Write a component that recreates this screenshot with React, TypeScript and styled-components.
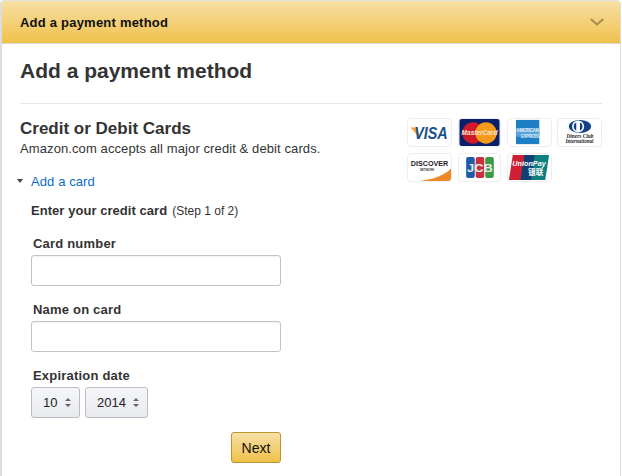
import React from "react";
import styled, { createGlobalStyle } from "styled-components";

const Global = createGlobalStyle`
  html, body { margin: 0; padding: 0; background: #fff; overflow: hidden; }
  body { font-family: "Liberation Sans", Arial, sans-serif; color: #333; }
  * { box-sizing: border-box; }
`;
const Panel = styled.div`
  width: 621px; height: 476px; overflow: hidden;
  border: 1px solid #ddd; border-left-width: 2px; border-bottom: none; border-top: 1px solid #e3e3e3;
  border-radius: 4px 4px 0 0; background: #fff;
`;
const Header = styled.header`
  height: 43px; display: flex; align-items: center; justify-content: space-between;
  padding: 1px 16px 0 18px;
  background: linear-gradient(#f7dfa5, #f0c14b);
  border-bottom: 1px solid #d9d9d9;
`;
const HeaderTitle = styled.h3`
  margin: 0; font-size: 13px; letter-spacing: .22px; font-weight: bold; color: #111;
`;
const Chevron = styled.svg`
  width: 14px; height: 8px; margin-top: -2px; display: block;
`;
const Body = styled.main`
  padding: 14px 18px 0 18px;
`;
const PageTitle = styled.h1`
  margin: 0; font-size: 21px; line-height: 26px; font-weight: bold; color: #333;
`;
const Divider = styled.hr`
  margin: 19px 0 0; border: 0; border-top: 1px solid #e7e7e7;
`;
const Columns = styled.div`
  display: flex; justify-content: space-between; padding-top: 14px;
`;
const MainColumn = styled.div`
  width: 330px;
`;
const SectionTitle = styled.h2`
  margin: 1px 0 0; font-size: 17px; line-height: 20px; font-weight: bold; color: #333;
`;
const SectionText = styled.p`
  margin: 2px 0 0; font-size: 13px; letter-spacing: .1px; line-height: 16px; color: #333;
`;
const Logos = styled.div`
  width: 195px; display: grid; grid-template-columns: 51px 49px 50px 45px; row-gap: 6px; align-content: start;
`;
const Logo = styled.div<{ $w: number }>`
  width: ${p => p.$w}px; height: 29px; border: 1px solid #eee; border-radius: 4px; overflow: hidden; background: #fff;
  svg { display: block; width: 100%; height: 100%; }
`;
const Toggle = styled.div`
  display: flex; align-items: center; margin-top: 16px; height: 16px;
`;
const Caret = styled.span`
  width: 0; height: 0; margin: 0 8px 0 -3px;
  border-left: 3.5px solid transparent; border-right: 3.5px solid transparent; border-top: 4px solid #444;
`;
const ToggleLink = styled.a`
  font-size: 13px; letter-spacing: .1px; color: #0a6bcb; text-decoration: none;
`;
const Form = styled.form`
  width: 250px; margin-left: 11px;
`;
const StepLine = styled.div`
  margin-top: 14px; height: 16px; display: flex; align-items: baseline;
`;
const StepTitle = styled.span`
  font-size: 13px; letter-spacing: .05px; font-weight: bold; color: #333;
`;
const StepNote = styled.span`
  margin-left: 5px; font-size: 12px; color: #333;
`;
const Label = styled.label<{ $top: number }>`
  display: block; margin: ${p => p.$top}px 0 3px 2px; font-size: 13px; letter-spacing: .2px; line-height: 16px; font-weight: bold; color: #333;
`;
const TextInput = styled.input`
  display: block; width: 250px; height: 31px; padding: 0 7px;
  border: 1px solid #c4c4c4; border-radius: 3px; background: #fff; outline: none;
  box-shadow: inset 0 1px 1px rgba(0,0,0,.05);
`;
const SelectRow = styled.div`
  display: flex; gap: 5px;
`;
const Select = styled.div<{ $w: number }>`
  width: ${p => p.$w}px; height: 31px; display: flex; align-items: center; justify-content: space-between;
  padding: 0 8px 0 11px; font-size: 13px; color: #222;
  border: 1px solid #b9bcc2; border-radius: 3px;
  background: linear-gradient(#f5f6f8, #e8eaee);
`;
const Arrows = styled.svg`
  width: 6px; height: 9px; display: block;
`;
const Actions = styled.div`
  display: flex; justify-content: flex-end; margin-top: 14px;
`;
const NextButton = styled.button`
  width: 50px; height: 31px; padding: 0; font: 14px "Liberation Sans", Arial, sans-serif; color: #111;
  border: 1px solid #b8962e; border-radius: 3px;
  background: linear-gradient(#f7dfa5, #f0c14b);
`;

const Updown = () => (
  <Arrows viewBox="0 0 6 9"><path d="M3 0 6 3H0ZM0 6h6L3 9Z" fill="#666" /></Arrows>
);

const Visa = () => (
  <svg viewBox="0 0 45 29">
    <path d="M2 9h7l3 9-1 1Z" fill="#f0a830" />
    <text x="24" y="21" textAnchor="middle" fontFamily="Liberation Sans" fontSize="17" fontWeight="bold" fontStyle="italic" fill="#1a4f8b" textLength="36" lengthAdjust="spacingAndGlyphs">VISA</text>
  </svg>
);
const Master = () => (
  <svg viewBox="0 0 43 29">
    <rect width="43" height="29" fill="#0a1f6b" />
    <circle cx="14.5" cy="15" r="11.5" fill="#cc1a2b" />
    <circle cx="28.5" cy="15" r="11.5" fill="#f59a1b" />
    <text x="21.5" y="17.5" textAnchor="middle" fontFamily="Liberation Sans" fontSize="7" fontWeight="bold" fontStyle="italic" fill="#fbe3d0">MasterCard</text>
  </svg>
);
const Amex = () => (
  <svg viewBox="0 0 45 29">
    <rect x="8" y="1" width="25" height="26" fill="#1f7fc4" />
    <rect x="8" y="10" width="25" height="9" fill="#5aa3d8" />
    <text x="20.5" y="14" textAnchor="middle" fontFamily="Liberation Sans" fontSize="5" fontWeight="bold" fill="#e3f0f9" textLength="24" lengthAdjust="spacingAndGlyphs">AMERICAN</text>
    <text x="23" y="20" textAnchor="middle" fontFamily="Liberation Sans" fontSize="5" fontWeight="bold" fill="#e3f0f9" textLength="19" lengthAdjust="spacingAndGlyphs">EXPRESS</text>
  </svg>
);
const Diners = () => (
  <svg viewBox="0 0 45 29">
    <ellipse cx="23" cy="8" rx="12" ry="7" fill="#123f85" />
    <circle cx="21" cy="8" r="6.5" fill="#fff" />
    <path d="M19 3.5a5 5 0 0 0 0 9ZM23 3.5a5 5 0 0 1 0 9Z" fill="#123f85" />
    <text x="23" y="20" textAnchor="middle" fontFamily="Liberation Serif" fontSize="6.5" fontStyle="italic" fontWeight="bold" fill="#222" textLength="29" lengthAdjust="spacingAndGlyphs">Diners Club</text>
    <text x="22.5" y="26" textAnchor="middle" fontFamily="Liberation Serif" fontSize="6" fontStyle="italic" fontWeight="bold" fill="#222" textLength="30" lengthAdjust="spacingAndGlyphs">International</text>
  </svg>
);
const Discover = () => (
  <svg viewBox="0 0 45 28">
    <path d="M45 15V28H13C28 26 38 22 45 15Z" fill="#ee8a2a" />
    <text x="22.5" y="12.5" textAnchor="middle" fontFamily="Liberation Sans" fontSize="7.5" fontWeight="bold" fill="#222" textLength="39" lengthAdjust="spacingAndGlyphs">DISCOVER</text>
    <text x="20" y="17.5" textAnchor="middle" fontFamily="Liberation Sans" fontSize="3" fontWeight="bold" fill="#444" textLength="15">NETWORK</text>
  </svg>
);
const Jcb = () => (
  <svg viewBox="0 0 43 28">
    <rect x="7.5" y="3" width="9" height="22" rx="2" fill="#1f5ba8" />
    <rect x="17.5" y="3" width="9" height="22" rx="2" fill="#c8303f" />
    <rect x="27.5" y="3" width="9" height="22" rx="2" fill="#3a9a48" />
    <text x="22" y="19" textAnchor="middle" fontFamily="Liberation Sans" fontSize="11" fontWeight="bold" fill="#e9eef2" textLength="27" lengthAdjust="spacingAndGlyphs">JCB</text>
  </svg>
);
const UnionPay = () => (
  <svg viewBox="0 0 45 28">
    <path d="M5 1h14l-4 26H1Z" fill="#d01f35" />
    <path d="M17 1h14l-4 26H13Z" fill="#103f76" />
    <path d="M28 1h15l-4 26H24Z" fill="#0f7e7e" />
    <text x="22" y="12" textAnchor="middle" fontFamily="Liberation Sans" fontSize="8" fontWeight="bold" fontStyle="italic" fill="#fff" textLength="35" lengthAdjust="spacingAndGlyphs">UnionPay</text>
    <text x="29" y="22" textAnchor="middle" fontFamily="Noto Sans CJK SC" fontSize="8" fontWeight="bold" fill="#fff">银联</text>
  </svg>
);

export default function App() {
  return (
    <>
      <Global />
      <Panel>
        <Header>
          <HeaderTitle>Add a payment method</HeaderTitle>
          <Chevron viewBox="0 0 14 8"><path d="M.8 1 7 6.5 13.2 1" fill="none" stroke="#a88c4c" strokeWidth="2" /></Chevron>
        </Header>
        <Body>
          <PageTitle>Add a payment method</PageTitle>
          <Divider />
          <Columns>
            <MainColumn>
              <SectionTitle>Credit or Debit Cards</SectionTitle>
              <SectionText>Amazon.com accepts all major credit &amp; debit cards.</SectionText>
              <Toggle>
                <Caret />
                <ToggleLink href="#">Add a card</ToggleLink>
              </Toggle>
              <Form>
                <StepLine>
                  <StepTitle>Enter your credit card</StepTitle>
                  <StepNote>(Step 1 of 2)</StepNote>
                </StepLine>
                <Label $top={17}>Card number</Label>
                <TextInput />
                <Label $top={16}>Name on card</Label>
                <TextInput />
                <Label $top={16}>Expiration date</Label>
                <SelectRow>
                  <Select $w={49}>10<Updown /></Select>
                  <Select $w={63}>2014<Updown /></Select>
                </SelectRow>
                <Actions><NextButton type="button">Next</NextButton></Actions>
              </Form>
            </MainColumn>
            <Logos>
              <Logo $w={45}><Visa /></Logo>
              <Logo $w={43}><Master /></Logo>
              <Logo $w={45}><Amex /></Logo>
              <Logo $w={45}><Diners /></Logo>
              <Logo $w={45}><Discover /></Logo>
              <Logo $w={43}><Jcb /></Logo>
              <Logo $w={45}><UnionPay /></Logo>
            </Logos>
          </Columns>
        </Body>
      </Panel>
    </>
  );
}
